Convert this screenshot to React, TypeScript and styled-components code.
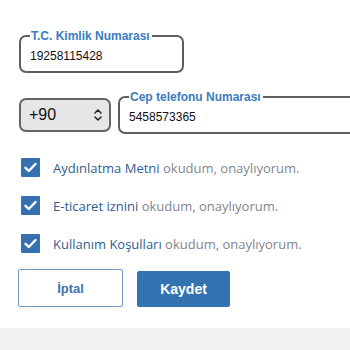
import React from "react";
import styled, { createGlobalStyle } from "styled-components";

const Global = createGlobalStyle`
  html, body { margin: 0; padding: 0; background: #ffffff; }
  body { font-family: "Liberation Sans", Arial, sans-serif; }
  * { box-sizing: border-box; }
`;

const Page = styled.div`
  width: 350px;
  height: 350px;
  overflow: hidden;
  display: flex;
  flex-direction: column;
  background: #fff;
`;

const Form = styled.div`
  padding: 29px 0 0 19px;
  display: flex;
  flex-direction: column;
  height: 328px;
`;

const Field = styled.fieldset<{ $w?: number; $h: number }>`
  margin: 0;
  width: ${(p) => (p.$w ? `${p.$w}px` : "auto")};
  height: ${(p) => p.$h}px;
  border: 2px solid #5f5f5f;
  border-radius: 7px;
  padding: 0 0 0 9px;
  flex: ${(p) => (p.$w ? "none" : "1")};
  min-width: 0;
`;

const Legend = styled.legend`
  padding: 0 2px 0 1px;
  margin-left: 0;
  font-size: 12px;
  font-weight: bold;
  color: #3b7cc1;
  line-height: 14px;
`;

const Value = styled.div`
  font-size: 12px;
  line-height: 14px;
  color: #111;
  padding-top: 6px;
`;

const PhoneRow = styled.div`
  display: flex;
  align-items: flex-start;
  gap: 7px;
  margin-top: 17px;
  margin-right: -40px;
`;

const Select = styled.div`
  margin-top: 8px;
  width: 92px;
  height: 34px;
  border: 2px solid #646464;
  border-radius: 7px;
  background: #e6e6e6;
  display: flex;
  align-items: center;
  justify-content: space-between;
  padding: 0 6px 0 8px;
  font-size: 16px;
  color: #111;
`;

const Checks = styled.div`
  display: flex;
  flex-direction: column;
  gap: 19px;
  margin-top: 24px;
  padding-left: 2px;
`;

const CheckRow = styled.div`
  display: flex;
  align-items: center;
  gap: 13px;
  font-family: "Open Sans", "Noto Sans", sans-serif;
  font-size: 13px;
`;

const Box = styled.span`
  width: 19px;
  height: 19px;
  background: #3571b0;
  border-radius: 1px;
  display: flex;
  align-items: center;
  justify-content: center;
  flex: none;
`;

const Strong = styled.span`
  color: #2f5d92;
`;

const Muted = styled.span`
  color: #7f868e;
`;

const Buttons = styled.div`
  display: flex;
  gap: 14px;
  align-items: flex-end;
  margin-top: 16px;
  margin-left: -1px;
`;

const Button = styled.button<{ $primary?: boolean }>`
  height: ${(p) => (p.$primary ? 36 : 38)}px;
  width: ${(p) => (p.$primary ? 93 : 105)}px;
  border: 1px solid ${(p) => (p.$primary ? "#3473b2" : "#6f9bc9")};
  border-radius: 2px;
  background: ${(p) => (p.$primary ? "#3473b2" : "#fff")};
  color: ${(p) => (p.$primary ? "#fff" : "#3f73ab")};
  font-family: "Liberation Sans", Arial, sans-serif;
  font-weight: bold;
  font-size: ${(p) => (p.$primary ? 14 : 13)}px;
  padding: 0;
`;

const Footer = styled.div`
  flex: 1;
  background: #f2f2f2;
`;

const Check = () => (
  <Box>
    <svg width="13" height="11" viewBox="0 0 13 11">
      <path d="M1.5 5.8 L4.8 9 L11.5 2" fill="none" stroke="#fff" strokeWidth="2.4" strokeLinecap="round" strokeLinejoin="round" />
    </svg>
  </Box>
);

const items = ["Aydınlatma Metni", "E-ticaret iznini", "Kullanım Koşulları"];

export default function App() {
  return (
    <Page>
      <Global />
      <Form>
        <Field $w={165} $h={44}>
          <Legend>T.C. Kimlik Numarası</Legend>
          <Value>19258115428</Value>
        </Field>
        <PhoneRow>
          <Select>
            <span>+90</span>
            <svg width="10" height="14" viewBox="0 0 10 14">
              <path d="M2 5 L5 2 L8 5 M2 9 L5 12 L8 9" fill="none" stroke="#222" strokeWidth="1.5" strokeLinecap="round" strokeLinejoin="round" />
            </svg>
          </Select>
          <Field $h={44}>
            <Legend>Cep telefonu Numarası</Legend>
            <Value>5458573365</Value>
          </Field>
        </PhoneRow>
        <Checks>
          {items.map((t) => (
            <CheckRow key={t}>
              <Check />
              <span>
                <Strong>{t}</Strong> <Muted>okudum, onaylıyorum.</Muted>
              </span>
            </CheckRow>
          ))}
        </Checks>
        <Buttons>
          <Button>İptal</Button>
          <Button $primary>Kaydet</Button>
        </Buttons>
      </Form>
      <Footer />
    </Page>
  );
}
